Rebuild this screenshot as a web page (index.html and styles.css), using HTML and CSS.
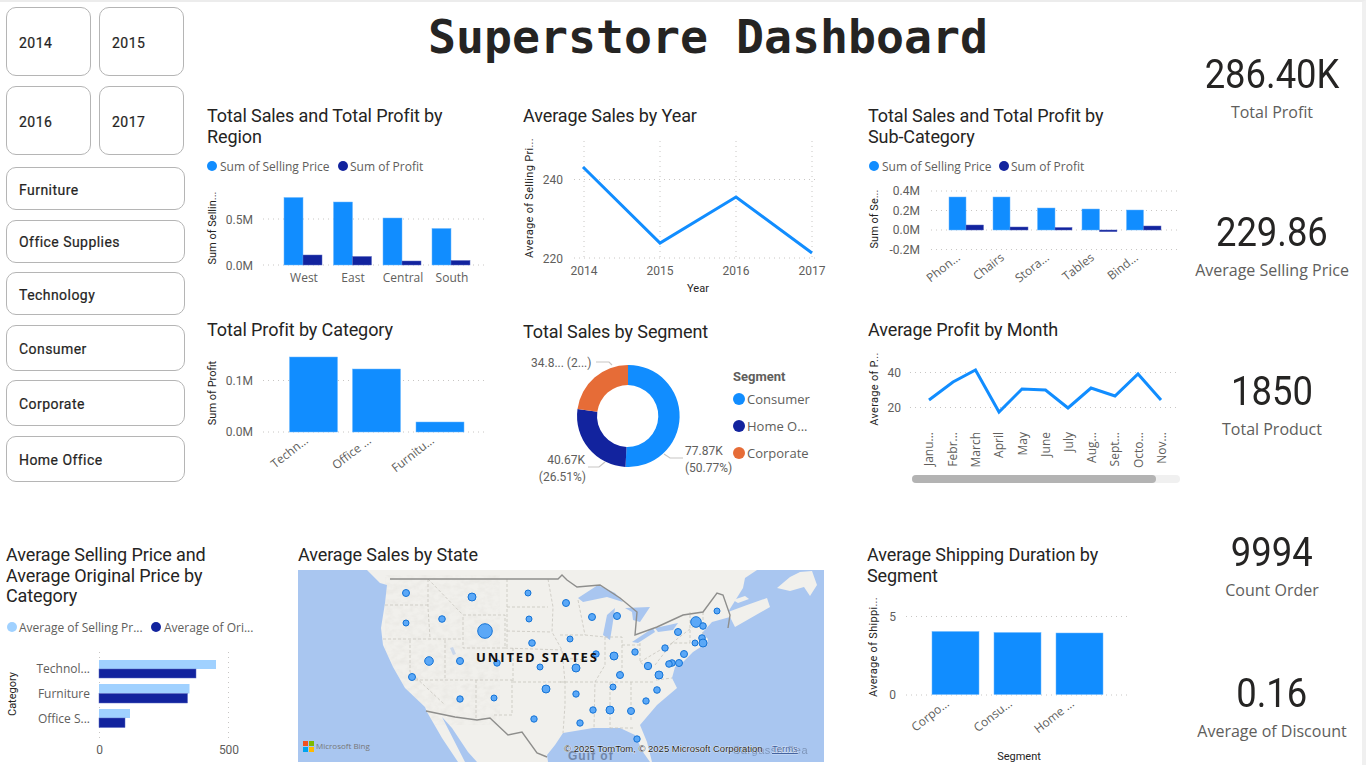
FILE: index.html
```html
<!DOCTYPE html>
<html lang="en">
<head>
<meta charset="utf-8">
<title>Superstore Dashboard</title>
<link rel="stylesheet" href="styles.css">
</head>
<body>
<div class="page">
  <div class="main">
    <section class="top">
      <aside class="slicers">
        <div class="years">
          <button class="chip">2014</button>
          <button class="chip">2015</button>
          <button class="chip">2016</button>
          <button class="chip">2017</button>
        </div>
        <div class="filters">
          <button class="chip short">Furniture</button>
          <button class="chip short">Office Supplies</button>
          <button class="chip short">Technology</button>
          <button class="chip tall">Consumer</button>
          <button class="chip tall">Corporate</button>
          <button class="chip tall">Home Office</button>
        </div>
      </aside>
      <div class="center">
        <h1 class="headline">Superstore Dashboard</h1>
        <div class="chart-grid">
          <article class="card">
            <h2 class="card-title two narrow">Total Sales and Total Profit by Region</h2>
            <svg class="chart c1" viewBox="207 147 300 173">
              <circle class="blue" cx="212" cy="166" r="5"/><text class="legend" x="220" y="171">Sum of Selling Price</text>
              <circle class="navy" cx="343" cy="166" r="5"/><text class="legend" x="350" y="171">Sum of Profit</text>
              <text class="axis-title" transform="translate(216 228) rotate(-90)" text-anchor="middle">Sum of Sellin...</text>
              <line class="grid" x1="263" x2="488" y1="219" y2="219"/><line class="grid" x1="263" x2="488" y1="265" y2="265"/>
              <text class="tick" x="253" y="224" text-anchor="end">0.5M</text><text class="tick" x="253" y="270" text-anchor="end">0.0M</text>
              <rect class="blue" x="284" y="197.5" width="19" height="67.5"/><rect class="navy" x="303" y="255" width="19" height="10"/>
              <rect class="blue" x="333.5" y="202" width="19" height="63"/><rect class="navy" x="352.5" y="256.5" width="19" height="8.5"/>
              <rect class="blue" x="383" y="218" width="19" height="47"/><rect class="navy" x="402" y="261" width="19" height="4"/>
              <rect class="blue" x="432" y="228.5" width="19" height="36.5"/><rect class="navy" x="451" y="260.5" width="19" height="4.5"/>
              <text class="label" x="304" y="282" text-anchor="middle">West</text><text class="label" x="353" y="282" text-anchor="middle">East</text>
              <text class="label" x="403" y="282" text-anchor="middle">Central</text><text class="label" x="452" y="282" text-anchor="middle">South</text>
            </svg>
          </article>
          <article class="card">
            <h2 class="card-title two">Average Sales by Year</h2>
            <svg class="chart c2" viewBox="523 147 330 173">
              <line class="grid" x1="584" x2="584" y1="141" y2="258"/><line class="grid" x1="660" x2="660" y1="141" y2="258"/><line class="grid" x1="736" x2="736" y1="141" y2="258"/><line class="grid" x1="812" x2="812" y1="141" y2="258"/>
              <line class="grid" x1="574" x2="816" y1="179.5" y2="179.5"/><line class="grid" x1="574" x2="816" y1="258" y2="258"/>
              <text class="tick" x="563" y="184" text-anchor="end">240</text><text class="tick" x="563" y="263" text-anchor="end">220</text>
              <polyline class="trend" points="583,167 660,243 736,197 812,253"/>
              <text class="tick" x="584" y="275" text-anchor="middle">2014</text><text class="tick" x="660" y="275" text-anchor="middle">2015</text><text class="tick" x="736" y="275" text-anchor="middle">2016</text><text class="tick" x="812" y="275" text-anchor="middle">2017</text>
              <text class="axis-title" x="698" y="292" text-anchor="middle">Year</text>
              <text class="axis-title wide" transform="translate(533 198) rotate(-90)" text-anchor="middle">Average of Selling Pri...</text>
            </svg>
          </article>
          <article class="card">
            <h2 class="card-title two narrow">Total Sales and Total Profit by Sub-Category</h2>
            <svg class="chart c3" viewBox="868 147 312 173">
              <circle class="blue" cx="874" cy="166" r="5"/><text class="legend" x="882" y="171">Sum of Selling Price</text>
              <circle class="navy" cx="1004" cy="166" r="5"/><text class="legend" x="1011" y="171">Sum of Profit</text>
              <text class="axis-title" transform="translate(878 219) rotate(-90)" text-anchor="middle">Sum of Se...</text>
              <line class="grid" x1="931" x2="1177" y1="191" y2="191"/><line class="grid" x1="931" x2="1177" y1="210.5" y2="210.5"/><line class="grid" x1="931" x2="1177" y1="230" y2="230"/><line class="grid" x1="931" x2="1177" y1="249.5" y2="249.5"/>
              <text class="tick" x="920" y="195" text-anchor="end">0.4M</text><text class="tick" x="920" y="215" text-anchor="end">0.2M</text><text class="tick" x="920" y="234" text-anchor="end">0.0M</text><text class="tick" x="920" y="254" text-anchor="end">-0.2M</text>
              <rect class="blue" x="949" y="197" width="17" height="33"/><rect class="navy" x="966" y="225" width="17.5" height="5"/>
              <rect class="blue" x="993" y="197" width="17" height="33"/><rect class="navy" x="1010" y="227" width="18" height="3"/>
              <rect class="blue" x="1037.5" y="208" width="17.5" height="22"/><rect class="navy" x="1055" y="227.5" width="17" height="2.5"/>
              <rect class="blue" x="1082" y="209" width="17.5" height="21"/><rect class="navy" x="1099.5" y="230" width="17.5" height="1.7"/>
              <rect class="blue" x="1126.5" y="210" width="17" height="20"/><rect class="navy" x="1143.5" y="226" width="17.5" height="4"/>
              <text class="label" transform="translate(961 259) rotate(-38)" text-anchor="end">Phon...</text>
              <text class="label" transform="translate(1005 259) rotate(-38)" text-anchor="end">Chairs</text>
              <text class="label" transform="translate(1050 259) rotate(-38)" text-anchor="end">Stora...</text>
              <text class="label" transform="translate(1095 259) rotate(-38)" text-anchor="end">Tables</text>
              <text class="label" transform="translate(1139 259) rotate(-38)" text-anchor="end">Bind...</text>
            </svg>
          </article>
          <article class="card">
            <h2 class="card-title">Total Profit by Category</h2>
            <svg class="chart c4" viewBox="207 341 300 159">
              <text class="axis-title" transform="translate(216 393) rotate(-90)" text-anchor="middle">Sum of Profit</text>
              <line class="grid" x1="263" x2="488" y1="380.5" y2="380.5"/><line class="grid" x1="263" x2="488" y1="432" y2="432"/>
              <text class="tick" x="253" y="385" text-anchor="end">0.1M</text><text class="tick" x="253" y="436" text-anchor="end">0.0M</text>
              <rect class="blue" x="289.5" y="357" width="48" height="75"/><rect class="blue" x="352.5" y="369" width="48" height="63"/><rect class="blue" x="416" y="422" width="48" height="10"/>
              <text class="label" transform="translate(309 442) rotate(-38)" text-anchor="end">Techn...</text>
              <text class="label" transform="translate(372 442) rotate(-38)" text-anchor="end">Office ...</text>
              <text class="label" transform="translate(435 442) rotate(-38)" text-anchor="end">Furnitu...</text>
            </svg>
          </article>
          <article class="card low">
            <h2 class="card-title">Total Sales by Segment</h2>
            <svg class="chart c5" viewBox="523 343 330 157">
              <path class="blue" d="M628 365A51 51 0 1 1 625.5 466.9L626.5 447A31 31 0 1 0 628 385Z"/>
              <path class="navy" d="M625.5 466.9A51 51 0 0 1 577.5 409L597.3 411.7A31 31 0 0 0 626.5 447Z"/>
              <path class="orange" d="M577.5 409A51 51 0 0 1 628 365L628 385A31 31 0 0 0 597.3 411.7Z"/>
              <polyline class="leader" points="596,362 609,362 612,365"/><polyline class="leader" points="664,454 670,458 683,458"/><polyline class="leader" points="605,462 599,467 588,467"/>
              <text class="tick" x="531" y="367">34.8... (2...)</text>
              <text class="tick" x="685" y="455">77.87K</text><text class="tick" x="685" y="472">(50.77%)</text>
              <text class="tick" x="585" y="464" text-anchor="end">40.67K</text><text class="tick" x="586" y="481" text-anchor="end">(26.51%)</text>
              <text class="legend-head" x="733" y="381">Segment</text>
              <circle class="blue" cx="739" cy="399" r="6"/><text class="legend-big" x="747" y="404">Consumer</text>
              <circle class="navy" cx="739" cy="426" r="6"/><text class="legend-big" x="747" y="431">Home O...</text>
              <circle class="orange" cx="739" cy="453" r="6"/><text class="legend-big" x="747" y="458">Corporate</text>
            </svg>
          </article>
          <article class="card">
            <h2 class="card-title">Average Profit by Month</h2>
            <svg class="chart c6" viewBox="868 341 312 159">
              <text class="axis-title wide" transform="translate(878 389) rotate(-90)" text-anchor="middle">Average of P...</text>
              <line class="grid" x1="910" x2="1177" y1="372.5" y2="372.5"/><line class="grid" x1="910" x2="1177" y1="407.5" y2="407.5"/>
              <text class="tick" x="901" y="377" text-anchor="end">40</text><text class="tick" x="901" y="412" text-anchor="end">20</text>
              <polyline class="trend" points="929,400 953,382 975.5,370 999,412 1022,389 1045.5,390 1068,408 1091,388 1115,396 1138,374 1161,400"/>
              <text class="label" transform="translate(933 432) rotate(-90)" text-anchor="end">Janu...</text>
              <text class="label" transform="translate(957 432) rotate(-90)" text-anchor="end">Febr...</text>
              <text class="label" transform="translate(980 432) rotate(-90)" text-anchor="end">March</text>
              <text class="label" transform="translate(1003 432) rotate(-90)" text-anchor="end">April</text>
              <text class="label" transform="translate(1027 432) rotate(-90)" text-anchor="end">May</text>
              <text class="label" transform="translate(1050 432) rotate(-90)" text-anchor="end">June</text>
              <text class="label" transform="translate(1073 432) rotate(-90)" text-anchor="end">July</text>
              <text class="label" transform="translate(1096 432) rotate(-90)" text-anchor="end">Aug...</text>
              <text class="label" transform="translate(1119 432) rotate(-90)" text-anchor="end">Sept...</text>
              <text class="label" transform="translate(1143 432) rotate(-90)" text-anchor="end">Octo...</text>
              <text class="label" transform="translate(1166 432) rotate(-90)" text-anchor="end">Nov...</text>
              <rect class="track" x="912" y="475" width="268" height="8" rx="4"/><rect class="thumb" x="912" y="475" width="244" height="8" rx="4"/>
            </svg>
          </article>
        </div>
      </div>
    </section>
    <section class="bottom">
      <article class="card b1">
        <h2 class="card-title three">Average Selling Price and Average Original Price by Category</h2>
        <svg class="chart c7" viewBox="6 607 292 158">
          <circle class="sky" cx="12" cy="627" r="5"/><text class="legend" x="19" y="632">Average of Selling Pr...</text>
          <circle class="navy" cx="156" cy="627" r="5"/><text class="legend" x="164" y="632">Average of Ori...</text>
          <text class="axis-title" transform="translate(16 694) rotate(-90)" text-anchor="middle">Category</text>
          <line class="grid" x1="99.5" x2="99.5" y1="652" y2="738"/><line class="grid" x1="228.5" x2="228.5" y1="652" y2="738"/>
          <text class="label" x="90" y="673" text-anchor="end">Technol...</text><text class="label" x="90" y="698" text-anchor="end">Furniture</text><text class="label" x="90" y="723" text-anchor="end">Office S...</text>
          <rect class="sky" x="99" y="660" width="117" height="9"/><rect class="navy" x="99" y="669" width="97" height="9"/>
          <rect class="sky" x="99" y="684" width="90.5" height="9.5"/><rect class="navy" x="99" y="693.5" width="88.5" height="9.5"/>
          <rect class="sky" x="99" y="709" width="31" height="9"/><rect class="navy" x="99" y="718" width="26" height="9.5"/>
          <text class="tick" x="99.5" y="754" text-anchor="middle">0</text><text class="tick" x="229" y="754" text-anchor="middle">500</text>
        </svg>
      </article>
      <article class="card b2">
        <h2 class="card-title">Average Sales by State</h2>
        <svg class="map" viewBox="298 570 526 192">
          <defs>
            <filter id="relief" x="0" y="0" width="100%" height="100%"><feTurbulence type="fractalNoise" baseFrequency="0.14 0.2" numOctaves="3" seed="4"/><feColorMatrix values="0 0 0 0 0.62  0 0 0 0 0.6  0 0 0 0 0.56  0.4 0 0 0 -0.14"/></filter>
            <clipPath id="land-clip"><path d="M367 570L380 583 387 585 385 603 381 628 383 645 393 667 405 688 425 707 427 712 442 738 458 762 465 762 442 717 452 728 468 752 477 762 548 762 547 755 555 745 563 733 593 728 620 728 635 735 643 752 650 762 652 762 647 742 640 725 657 705 677 688 672 678 675 667 683 662 693 652 707 643 708 639 702 633 712 622 730 617 735 627 770 607 767 598 747 605 728 612 743 588 745 578 757 570Z"/></clipPath>
          </defs>
          <g class="base">
            <rect class="sea" x="298" y="570" width="526" height="192"/>
            <path class="land" d="M367 570L380 583 387 585 385 603 381 628 383 645 393 667 405 688 425 707 427 712 442 738 458 762 465 762 442 717 452 728 468 752 477 762 548 762 547 755 555 745 563 733 593 728 620 728 635 735 643 752 650 762 652 762 647 742 640 725 657 705 677 688 672 678 675 667 683 662 693 652 707 643 708 639 702 633 712 622 730 617 735 627 770 607 767 598 747 605 728 612 743 588 745 578 757 570Z"/>
            <path class="land" d="M777 588L790 577 800 572 812 571 817 585 810 596 804 587 790 591Z"/>
            <path class="land" d="M733 600L745 596 749 599 738 603Z"/>
            <g clip-path="url(#land-clip)"><rect class="relief" x="385" y="575" width="115" height="150" filter="url(#relief)"/></g>
            <g class="lake"><path d="M578 598L598 585 615 593 623 602 607 597 583 602Z"/><path d="M603 635L607 615 615 608 612 628 610 640Z"/><path d="M625 608L650 607 640 622 633 620 632 612Z"/><path d="M632 642L653 628 655 632 638 643Z"/><path d="M655 628L678 623 673 630 658 632Z"/></g>
            <path class="salt" d="M450 648L453 647 456 654 453 655Z"/>
            <g class="states">
              <path d="M385 605H428M428 579V608L430 638M383 639H463M463 615H505V648H463V615M428 579L463 615M507 579V648M507 607H548M507 631L552 632M505 648L562 650M513 682H565M513 648V682M410 640V672L445 705M445 640V680M410 680H512M476 680V720M512 680V715H492"/>
              <path d="M548 579L553 607 552 632 562 650 565 682V705L563 733M560 635H585M560 658L588 660M560 682H595M585 635L605 637V665L595 682 594 728M578 600L585 635M605 637H622V668L620 675M622 645H640M640 643V662L650 670M640 662L672 643M595 682H655M610 682V728M631 682V722M610 728H635M655 665L672 643H690M690 643V612M703 612V640M672 643L695 625M656 680L672 678"/>
            </g>
            <polyline class="border" points="390,579 558,579 562,575 567,580 577,587 600,585 620,598 637,612 635,635 657,627 683,615 703,612 717,593 723,595 730,615 728,628"/>
            <polyline class="border" points="426,711 455,717 477,720 490,718 508,735 522,732 537,753 547,757"/>
          </g>
          <g class="dot">
            <circle cx="406" cy="593" r="3.5"/><circle cx="472" cy="597" r="4"/><circle cx="528" cy="593" r="3"/><circle cx="566" cy="603" r="3.5"/><circle cx="406" cy="623" r="3"/><circle cx="442" cy="619" r="3.3"/><circle cx="529" cy="619" r="3"/><circle cx="485" cy="631" r="7.3"/><circle cx="532" cy="643" r="3.3"/><circle cx="429" cy="661" r="4.3"/><circle cx="460" cy="661" r="3.5"/><circle cx="497" cy="663" r="3.2"/><circle cx="540" cy="667" r="3"/><circle cx="412" cy="677" r="3.5"/><circle cx="546" cy="689" r="4"/><circle cx="460" cy="699" r="3.2"/><circle cx="494" cy="698" r="3"/><circle cx="534" cy="719" r="3.2"/>
            <circle cx="592" cy="617" r="3.5"/><circle cx="617" cy="616" r="3.5"/><circle cx="570" cy="639" r="3"/><circle cx="596" cy="654" r="3.2"/><circle cx="614" cy="656" r="4"/><circle cx="635" cy="652" r="3.2"/><circle cx="665" cy="648" r="3.2"/><circle cx="678" cy="632" r="3.5"/><circle cx="696" cy="622" r="5.3"/><circle cx="703" cy="626" r="3.3"/><circle cx="717" cy="611" r="3"/><circle cx="702" cy="638" r="3.3"/><circle cx="703" cy="643" r="4"/><circle cx="695" cy="643" r="3"/><circle cx="684" cy="654" r="3.5"/><circle cx="679" cy="663" r="3.5"/><circle cx="672" cy="663" r="3.3"/><circle cx="669" cy="664" r="3.3"/><circle cx="648" cy="666" r="3.7"/><circle cx="576" cy="668" r="4"/><circle cx="620" cy="675" r="3.5"/><circle cx="659" cy="675" r="4"/><circle cx="613" cy="687" r="3"/><circle cx="657" cy="690" r="3.3"/><circle cx="576" cy="694" r="3.2"/><circle cx="646" cy="701" r="3.2"/><circle cx="593" cy="710" r="3.2"/><circle cx="610" cy="710" r="4"/><circle cx="631" cy="711" r="3.5"/><circle cx="580" cy="723" r="3.2"/><circle cx="637" cy="739" r="3.2"/>
          </g>
          <text class="country" x="476" y="662">UNITED STATES</text>
          <text class="sea-name" x="568" y="760">Gulf of</text>
          <text class="sea-name faint" x="733" y="754">Sargasso Sea</text>
          <rect class="ms-r" x="303" y="741" width="5" height="5"/><rect class="ms-g" x="309" y="741" width="5" height="5"/><rect class="ms-b" x="303" y="747" width="5" height="5"/><rect class="ms-y" x="309" y="747" width="5" height="5"/>
          <text class="bing" x="316" y="749">Microsoft Bing</text>
          <text class="attrib" x="564" y="752">© 2025 TomTom, © 2025 Microsoft Corporation</text>
          <text class="attrib terms" x="772" y="752">Terms</text>
        </svg>
      </article>
      <article class="card b3">
        <h2 class="card-title narrow">Average Shipping Duration by Segment</h2>
        <svg class="chart c9" viewBox="867 586 313 179">
          <text class="axis-title wide" transform="translate(877 647) rotate(-90)" text-anchor="middle">Average of Shippi...</text>
          <line class="grid" x1="906" x2="1131" y1="616.5" y2="616.5"/><line class="grid" x1="906" x2="1131" y1="695" y2="695"/>
          <text class="tick" x="896" y="621" text-anchor="end">5</text><text class="tick" x="896" y="699" text-anchor="end">0</text>
          <rect class="blue" x="932" y="631.5" width="47" height="63"/><rect class="blue" x="994" y="632.5" width="47" height="62"/><rect class="blue" x="1056" y="633" width="47" height="61.5"/>
          <text class="label" transform="translate(950 705) rotate(-38)" text-anchor="end">Corpo...</text>
          <text class="label" transform="translate(1013 705) rotate(-38)" text-anchor="end">Consu...</text>
          <text class="label" transform="translate(1075 705) rotate(-38)" text-anchor="end">Home ...</text>
          <text class="axis-title" x="1019" y="760" text-anchor="middle">Segment</text>
        </svg>
      </article>
    </section>
  </div>
  <aside class="kpis">
    <div class="kpi"><div class="kpi-value">286.40K</div><div class="kpi-label">Total Profit</div></div>
    <div class="kpi"><div class="kpi-value">229.86</div><div class="kpi-label">Average Selling Price</div></div>
    <div class="kpi"><div class="kpi-value">1850</div><div class="kpi-label">Total Product</div></div>
    <div class="kpi"><div class="kpi-value">9994</div><div class="kpi-label">Count Order</div></div>
    <div class="kpi"><div class="kpi-value">0.16</div><div class="kpi-label">Average of Discount</div></div>
  </aside>
</div>
</body>
</html>
```
FILE: styles.css
```css
* { box-sizing: border-box; }
html, body { margin: 0; padding: 0; background: #fff; }
body { width: 1366px; height: 765px; overflow: hidden; font-family: "Roboto", "Liberation Sans", sans-serif; color: #252423; }
.page { display: flex; width: 1366px; height: 765px; overflow: hidden; border-top: 2px solid #ececec; border-right: 4px solid #f0f0f0; }
.main { width: 1180px; display: flex; flex-direction: column; }
.top { display: flex; height: 543px; }
.slicers { width: 185px; padding: 5px 0 0 6px; display: flex; flex-direction: column; gap: 12px; }
.years { display: grid; grid-template-columns: 84.5px 84.5px; grid-auto-rows: 69px; gap: 10px 8.5px; }
.filters { display: flex; flex-direction: column; gap: 9.5px; width: 178.5px; }
.chip { background: #fff; border: 1px solid #b5b5b5; border-bottom-width: 1.5px; border-radius: 10px; padding: 2px 0 0 12px; text-align: left; font: 400 14px "Roboto", sans-serif; letter-spacing: .45px; -webkit-text-stroke: .2px #252423; color: #252423; }
.short { height: 43px; }
.tall { height: 46px; }
.center { flex: 1; padding-left: 22px; display: flex; flex-direction: column; }
.headline { margin: 0 0 0 221px; height: 104px; font: 700 46.5px/70px "DejaVu Sans Mono", monospace; color: #252423; white-space: nowrap; }
.chart-grid { display: grid; grid-template-columns: 316px 345px 312px; grid-template-rows: 214px 1fr; }
.card { display: flex; flex-direction: column; }
.low { padding-top: 2px; }
.card-title { margin: 0; font: 400 18px/20.5px "Roboto", sans-serif; letter-spacing: -.1px; color: #252423; min-height: 21px; }
.two { min-height: 41px; }
.three { min-height: 62px; width: 215px; }
.narrow { width: 260px; }
.chart, .map { display: block; flex: none; overflow: visible; }
.c1 { width: 300px; height: 173px; }
.c2 { width: 330px; height: 173px; }
.c3 { width: 312px; height: 173px; }
.c4, .c6 { height: 159px; }
.c4 { width: 300px; }
.c5 { width: 330px; height: 157px; }
.c6 { width: 312px; }
.bottom { display: flex; height: 220px; }
.b1 { width: 292px; margin-left: 6px; }
.b2 { width: 569px; }
.b2 .card-title { min-height: 25px; }
.b3 { width: 313px; }
.b3 .card-title { min-height: 41px; }
.c7 { width: 292px; height: 158px; }
.map { width: 526px; height: 192px; overflow: hidden; }
.c9 { width: 313px; height: 179px; }
.blue { fill: #118dff; }
.navy { fill: #12239e; }
.orange { fill: #e66c37; }
.sky { fill: #a0d1ff; }
rect.blue { stroke: #6db8ff; stroke-width: .5; }
rect.navy { stroke: #5a68c0; stroke-width: .5; }
.grid { stroke: #c8c6c4; stroke-width: 1; stroke-dasharray: 1 4; }
.trend { fill: none; stroke: #118dff; stroke-width: 3; }
.leader { fill: none; stroke: #c8c6c4; stroke-width: 1.2; }
.legend, .label { font: 12px "Open Sans", sans-serif; fill: #605e5c; }
.tick { font: 12px "Roboto", sans-serif; fill: #605e5c; }
.axis-title { font: 11px "Roboto", sans-serif; fill: #252423; }
.wide { letter-spacing: .3px; }
.legend-head { font: 700 13px "Roboto", sans-serif; fill: #605e5c; }
.legend-big { font: 13px "Open Sans", sans-serif; fill: #605e5c; }
.track { fill: #f0f0f0; }
.thumb { fill: #b3b3b3; }
.base { filter: blur(.45px); }
.sea { fill: #a9c6f0; }
.land { fill: #f1f0ec; }
.relief { fill: #000; }
.lake path { fill: #a9c6f0; }
.salt { fill: #c9d6ea; }
.states path { fill: none; stroke: #c8c5be; stroke-width: .8; stroke-dasharray: 3 2; }
.border { fill: none; stroke: #8e8e8c; stroke-width: 1.4; }
.dot circle { fill: #5ba8f7; stroke: #1473d6; stroke-width: 1; }
.country { font: 700 13px "Open Sans", sans-serif; letter-spacing: 1.9px; fill: #111; }
.sea-name { font: 700 12px "Liberation Sans", sans-serif; letter-spacing: 1px; fill: #7186a8; }
.faint { font: 400 11px "Liberation Sans", sans-serif; letter-spacing: .5px; opacity: .75; }
.ms-r { fill: #f25022; }
.ms-g { fill: #7fba00; }
.ms-b { fill: #00a4ef; }
.ms-y { fill: #ffb900; }
.bing { font: 8px "Open Sans", sans-serif; fill: #777; }
.attrib { font: 9.5px "Liberation Sans", sans-serif; fill: #222; paint-order: stroke; stroke: #fff; stroke-width: .6px; }
.terms { text-decoration: underline; fill: #3b5c9c; }
.kpis { width: 182px; display: grid; grid-template-rows: 158px 159px 161px 141px 72px; padding-top: 51px; justify-items: center; }
.kpi { text-align: center; transform: translateX(1px); }
.kpi-value { font: 400 40px/44px "Roboto", sans-serif; color: #252423; transform: scaleX(.91); }
.kpi-label { margin-top: 3px; font: 16px/24px "Open Sans", sans-serif; color: #605e5c; white-space: nowrap; }
```
